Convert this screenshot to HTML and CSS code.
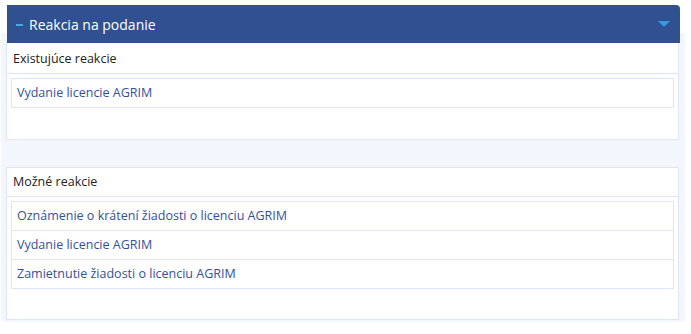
FILE: index.html
```html
<!DOCTYPE html>
<html lang="sk">
<head>
    <meta charset="UTF-8">
    <meta name="viewport" content="width=device-width, initial-scale=1.0">
    <title>Reakcia na podanie</title>
    <link rel="stylesheet" href="styles.css">
</head>
<body>
    <div class="box">
        <div class="box-header">
            <span class="dash"></span>
            <span class="box-title">Reakcia na podanie</span>
            <svg class="caret" width="12" height="6" viewBox="0 0 12 6">
                <polygon points="0,0 12,0 6,6" fill="#2f9ce2"/>
            </svg>
        </div>

        <div class="panel panel-first">
            <div class="panel-title">Existujúce reakcie</div>
            <ul class="list">
                <li>Vydanie licencie AGRIM</li>
            </ul>
        </div>

        <div class="panel">
            <div class="panel-title">Možné reakcie</div>
            <ul class="list">
                <li>Oznámenie o krátení žiadosti o licenciu AGRIM</li>
                <li>Vydanie licencie AGRIM</li>
                <li>Zamietnutie žiadosti o licenciu AGRIM</li>
            </ul>
        </div>
    </div>
</body>
</html>
```

FILE: styles.css
```css
body {
    margin: 0;
    background-color: #fff;
    font-family: "Open Sans", "Noto Sans", sans-serif;
    color: #222;
}

.box {
    width: 684px;
    margin: 5px 0 0 1px;
    padding-bottom: 2px;
    background: linear-gradient(#fff 28px, #f3f6fd 28px);
    border-radius: 0 0 4px 4px;
}

.box-header {
    display: flex;
    align-items: center;
    width: 673px;
    height: 38px;
    margin-left: 6px;
    box-sizing: border-box;
    padding: 0 8px 0 9px;
    background-color: #30508f;
    border-radius: 0 4px 0 0;
    color: #fff;
}

.dash {
    width: 7px;
    height: 2px;
    margin-top: 2px;
    margin-right: 6px;
    background-color: #4aa9e2;
}

.box-title {
    font-size: 14px;
    flex: 1;
}

.caret {
    margin-right: 2px;
    margin-top: -1px;
}

.panel {
    width: 673px;
    margin: 27px 0 0 5px;
    box-sizing: border-box;
    background-color: #fff;
    border: 1px solid #dce6f8;
    padding-bottom: 30px;
}

.panel-first {
    margin-top: 0;
    border-top: 0;
    padding-top: 2px;
    padding-bottom: 31px;
}

.panel-title {
    height: 28px;
    line-height: 28px;
    padding-left: 6px;
    font-size: 12.5px;
    border-bottom: 1px solid #dce6f8;
}

.list {
    list-style: none;
    margin: 4px 4px 0 4px;
    padding: 0;
    border-top: 1px solid #dce6f8;
}

.list li {
    height: 28px;
    line-height: 28px;
    padding-left: 5px;
    font-size: 12.5px;
    color: #34509c;
    border: 1px solid #dce6f8;
    border-top: 0;
}
```
